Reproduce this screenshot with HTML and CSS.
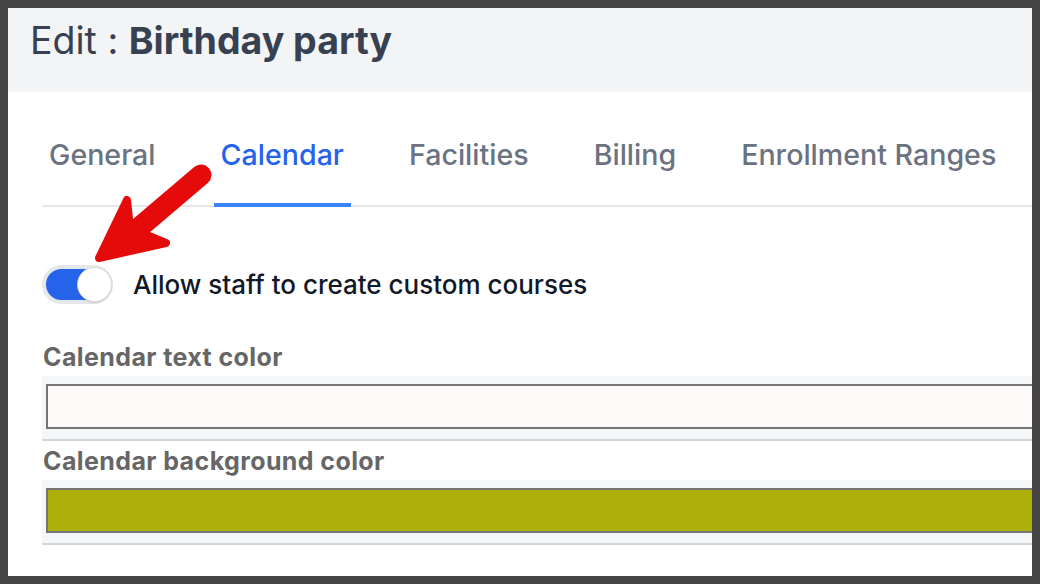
FILE: index.html
```html
<!DOCTYPE html>
<html lang="en">
<head>
<meta charset="utf-8">
<title>Edit : Birthday party</title>
<link rel="stylesheet" href="styles.css">
</head>
<body>
<div class="frame">
  <div class="panel">
    <header class="page-header">
      <h1 class="title">Edit : <strong>Birthday party</strong></h1>
    </header>
    <main class="content">
      <nav class="tabs">
        <a class="tab">General</a>
        <a class="tab active">Calendar</a>
        <a class="tab">Facilities</a>
        <a class="tab">Billing</a>
        <a class="tab">Enrollment Ranges</a>
      </nav>
      <label class="toggle-row">
        <span class="toggle"><span class="track"><span class="knob"></span></span></span>
        <span class="toggle-label">Allow staff to create custom courses</span>
      </label>
      <div class="field">
        <div class="field-label">Calendar text color</div>
        <div class="field-box"><div class="swatch swatch-text"></div></div>
      </div>
      <div class="field">
        <div class="field-label">Calendar background color</div>
        <div class="field-box"><div class="swatch swatch-bg"></div></div>
      </div>
    </main>
  </div>
</div>
<svg class="annotation" width="1040" height="584" viewBox="0 0 1040 584" aria-hidden="true">
  <line x1="201" y1="175" x2="134" y2="232" stroke="#e60b0b" stroke-width="21" stroke-linecap="round"/>
  <polygon points="99,258 127,200 130,228 166,243" fill="#e60b0b" stroke="#e60b0b" stroke-width="8" stroke-linejoin="round"/>
</svg>
</body>
</html>
```

FILE: styles.css
```css
* { box-sizing: border-box; }
html, body { margin: 0; padding: 0; }
body {
  width: 1040px;
  height: 584px;
  background: #444444;
  font-family: Inter, "Noto Sans", sans-serif;
  position: relative;
  overflow: hidden;
}
.frame {
  padding: 8px;
  height: 584px;
}
.panel {
  background: #ffffff;
  height: 568px;
  overflow: hidden;
}
.page-header {
  background: #f3f4f6;
  height: 84px;
  padding: 11px 0 0 22px;
}
.title {
  margin: 0;
  font-size: 37.5px;
  line-height: 44px;
  font-weight: 400;
  color: #374151;
}
.title strong { font-weight: 700; }
.content {
  padding: 0 0 0 34px;
}
.tabs {
  display: flex;
  gap: 51px;
  margin-top: 46px;
  border-bottom: 2px solid #e5e7eb;
  margin-right: -20px;
}
.tab {
  display: block;
  padding: 0 7px 31px;
  font-size: 28.6px;
  line-height: 34px;
  font-weight: 500;
  color: #6b7280;
  border-bottom: 4px solid transparent;
  margin-bottom: -2px;
}
.tab.active {
  color: #2563eb;
  border-bottom-color: #3b82f6;
}
.toggle-row {
  display: flex;
  align-items: center;
  gap: 20px;
  margin-top: 58px;
}
.toggle {
  display: block;
  width: 71px;
  height: 39px;
  border-radius: 20px;
  background: #e5e7eb;
  padding: 4px;
}
.track {
  display: block;
  position: relative;
  height: 31px;
  border-radius: 16px;
  background: #2563eb;
}
.knob {
  position: absolute;
  right: -3px;
  top: -2px;
  width: 35px;
  height: 35px;
  border-radius: 50%;
  background: #ffffff;
  border: 1px solid #d9dbe0;
  box-shadow: 0 1px 2px rgba(0,0,0,0.12);
}
.toggle-label {
  font-size: 26px;
  font-weight: 500;
  color: #111827;
}
.field { margin-top: 38px; }
.field + .field { margin-top: 5px; }
.field-label {
  font-size: 25px;
  line-height: 30px;
  font-weight: 700;
  letter-spacing: 0.4px;
  color: #666666;
  padding-left: 1px;
  margin-bottom: 4px;
}
.field-box {
  background: #f5f6f8;
  border-bottom: 2px solid #d4d5d9;
  padding: 8px 0 10px 4px;
  margin-right: -20px;
}
.swatch {
  height: 45px;
  border: 2px solid #757575;
}
.swatch-text { background: #fdf9f8; }
.swatch-bg { background: #afaf09; }
.annotation {
  position: absolute;
  left: 0;
  top: 0;
  pointer-events: none;
}
```
